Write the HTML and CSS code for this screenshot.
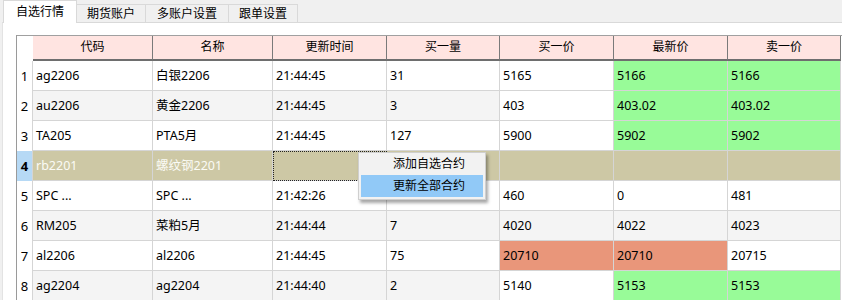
FILE: index.html
```html
<!DOCTYPE html>
<html lang="zh-CN">
<head>
    <meta charset="UTF-8">
    <title>自选行情</title>
    <link rel="stylesheet" href="styles.css">
</head>
<body>
<div class="tabs">
    <div class="tab active">自选行情</div>
    <div class="tab">期货账户</div>
    <div class="tab wide">多账户设置</div>
    <div class="tab">跟单设置</div>
</div>
<div class="pane">
    <div class="grid">
        <div class="row head">
            <div class="corner"></div>
            <div class="th">代码</div>
            <div class="th">名称</div>
            <div class="th">更新时间</div>
            <div class="th">买一量</div>
            <div class="th">买一价</div>
            <div class="th">最新价</div>
            <div class="th">卖一价</div>
        </div>
        <div class="row">
            <div class="rh">1</div>
            <div class="td">ag2206</div>
            <div class="td">白银2206</div>
            <div class="td">21:44:45</div>
            <div class="td">31</div>
            <div class="td">5165</div>
            <div class="td up">5166</div>
            <div class="td up">5166</div>
        </div>
        <div class="row alt">
            <div class="rh">2</div>
            <div class="td">au2206</div>
            <div class="td">黄金2206</div>
            <div class="td">21:44:45</div>
            <div class="td">3</div>
            <div class="td white">403</div>
            <div class="td up">403.02</div>
            <div class="td up">403.02</div>
        </div>
        <div class="row">
            <div class="rh">3</div>
            <div class="td">TA205</div>
            <div class="td">PTA5月</div>
            <div class="td">21:44:45</div>
            <div class="td">127</div>
            <div class="td">5900</div>
            <div class="td up">5902</div>
            <div class="td up">5902</div>
        </div>
        <div class="row sel">
            <div class="rh">4</div>
            <div class="td">rb2201</div>
            <div class="td">螺纹钢2201</div>
            <div class="td focus"></div>
            <div class="td"></div>
            <div class="td"></div>
            <div class="td"></div>
            <div class="td"></div>
        </div>
        <div class="row">
            <div class="rh">5</div>
            <div class="td">SPC ...</div>
            <div class="td">SPC ...</div>
            <div class="td">21:42:26</div>
            <div class="td"></div>
            <div class="td">460</div>
            <div class="td">0</div>
            <div class="td">481</div>
        </div>
        <div class="row alt">
            <div class="rh">6</div>
            <div class="td">RM205</div>
            <div class="td">菜粕5月</div>
            <div class="td">21:44:44</div>
            <div class="td">7</div>
            <div class="td">4020</div>
            <div class="td">4022</div>
            <div class="td">4023</div>
        </div>
        <div class="row">
            <div class="rh">7</div>
            <div class="td">al2206</div>
            <div class="td">al2206</div>
            <div class="td">21:44:45</div>
            <div class="td">75</div>
            <div class="td down">20710</div>
            <div class="td down">20710</div>
            <div class="td">20715</div>
        </div>
        <div class="row alt">
            <div class="rh">8</div>
            <div class="td">ag2204</div>
            <div class="td">ag2204</div>
            <div class="td">21:44:40</div>
            <div class="td">2</div>
            <div class="td white">5140</div>
            <div class="td up">5153</div>
            <div class="td up">5153</div>
        </div>
    </div>
    <!--右键菜单-->
    <div class="menu">
        <div class="item">添加自选合约</div>
        <div class="item hover">更新全部合约</div>
    </div>
</div>
</body>
</html>
```

FILE: styles.css
```css
html, body {
    margin: 0;
    padding: 0;
    height: 100%;
    overflow: hidden;
}

body {
    background: #f0f0f0;
    font-family: "Noto Sans", "Noto Sans CJK SC", sans-serif;
    font-size: 12px;
    color: #000;
}

.tabs {
    display: flex;
    align-items: flex-end;
    height: 22px;
    padding-left: 3px;
}

.tab {
    box-sizing: border-box;
    height: 18px;
    line-height: 17px;
    padding: 0 10px;
    border: 1px solid #d9d9d9;
    border-bottom: none;
    border-left: none;
    background: #f0f0f0;
}

.tab.wide {
    padding: 0 11px;
}

.tab.active {
    height: 23px;
    line-height: 22px;
    padding: 0 12px;
    margin-bottom: -1px;
    border-left: 1px solid #d9d9d9;
    background: #fff;
    position: relative;
    z-index: 1;
}

.pane {
    position: relative;
    box-sizing: border-box;
    margin-left: 2px;
    height: calc(100% - 22px);
    overflow: hidden;
    border-top: 1px solid #d9d9d9;
    border-left: 1px solid #e3e3e3;
    background: #fff;
    padding: 12px 0 0 13px;
}

.grid {
    width: 825px;
    border-left: 1px solid #9a9a9a;
}

.row {
    display: grid;
    grid-template-columns: 16px 120px 120px 114px 113px 114px 114px 113px;
    height: 30px;
}

.row.head {
    height: 26px;
    border-top: 1px solid #a0a0a0;
    box-sizing: border-box;
}

.corner {
    background: #fff;
}

.th {
    background: #ffe4e1;
    border-right: 1px solid #7a7a7a;
    border-bottom: 2px solid #6e6e6e;
    text-align: center;
    line-height: 22px;
}

.rh {
    background: #fff;
    border-right: 1px solid #d5d5d5;
    text-align: center;
    line-height: 30px;
    font-size: 13px;
}

.td {
    box-sizing: border-box;
    border-right: 1px solid #d5d5d5;
    border-bottom: 1px solid #d5d5d5;
    padding-left: 3px;
    line-height: 29px;
    font-size: 12.5px;
    white-space: nowrap;
    overflow: hidden;
}

.row.alt .td {
    background: #f4f4f4;
}

.row.alt .td.white {
    background: #fff;
}

.row .td.up {
    background: #98fb98;
}

.row .td.down {
    background: #e9967a;
}

.row.sel .td {
    background: #cdc8a5;
    color: #fbfbf5;
}

.row.sel .rh {
    background: #b6d9f5;
    font-weight: bold;
}

.td.focus {
    outline: 1px dotted #222;
    outline-offset: -1px;
}

.menu {
    position: absolute;
    left: 355px;
    top: 129px;
    width: 128px;
    border: 1px solid #cfcfcf;
    background: #f2f2f2;
    padding: 0 2px 2px 2px;
    box-sizing: border-box;
    box-shadow: 2px 3px 3px rgba(0, 0, 0, 0.35);
}

.item {
    height: 22px;
    line-height: 22px;
    padding-left: 32px;
}

.item.hover {
    background: #91c9f7;
}
```
